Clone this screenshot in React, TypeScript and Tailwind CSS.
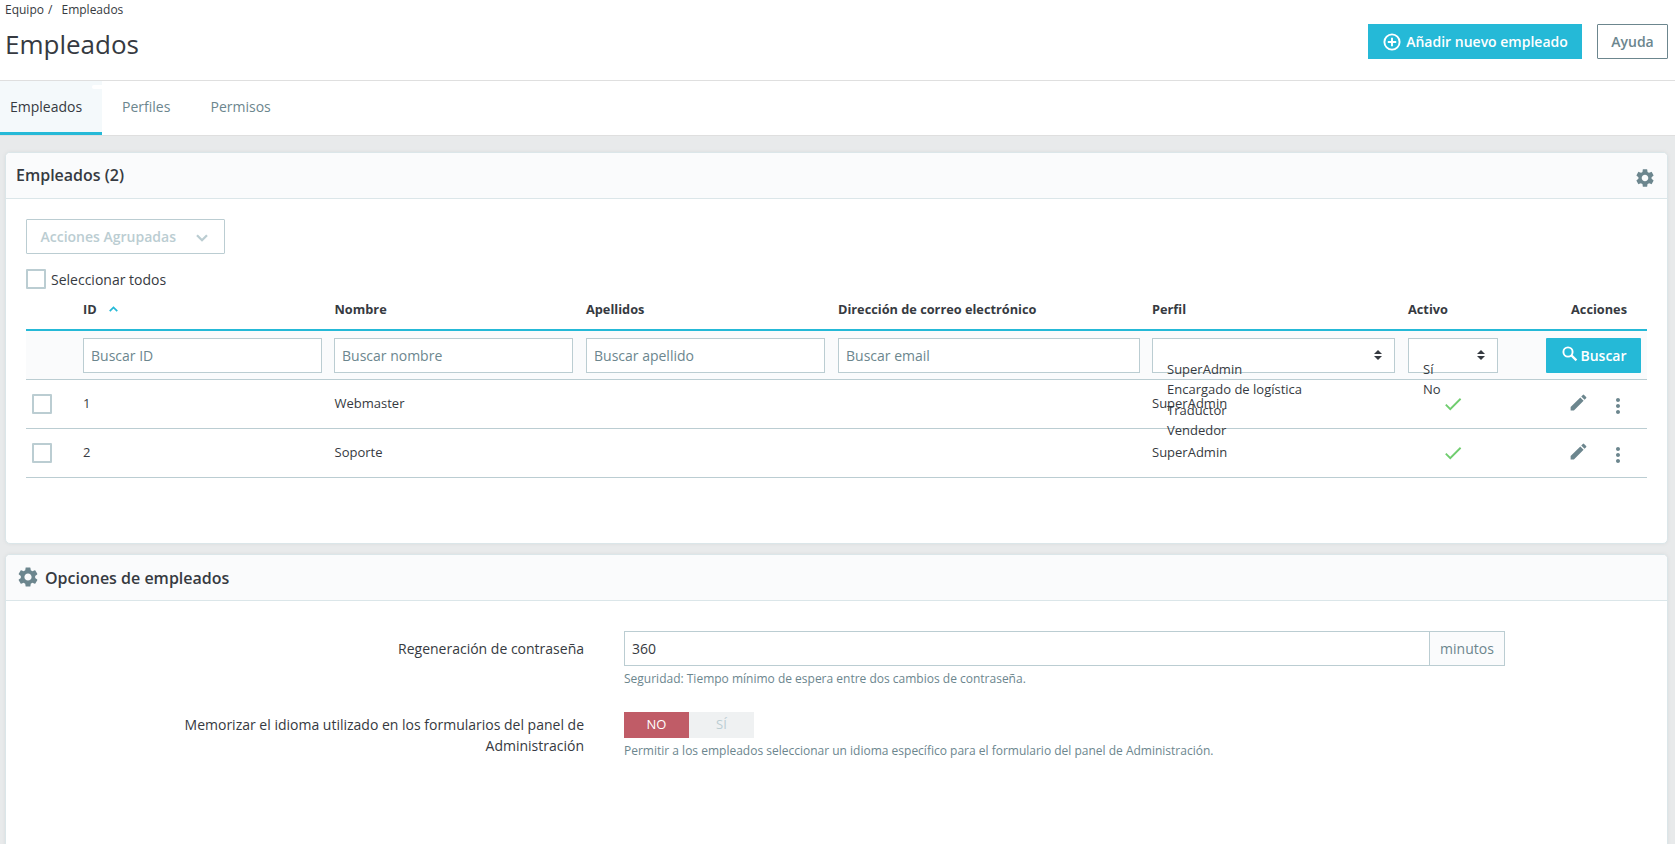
import React from "react";
import { MdCheck, MdEdit, MdMoreVert, MdSettings } from "react-icons/md";

const columns = "grid grid-cols-[51px_251px_252px_252px_314px_256px_102px_143px]";

const employees = [
  { id: 1, name: "Webmaster", profile: "SuperAdmin" },
  { id: 2, name: "Soporte", profile: "SuperAdmin" },
];

function ChevronIcon({ className }: { className: string }) {
  return (
    <svg viewBox="0 0 12 8" className={`fill-none stroke-current ${className}`}>
      <path d="M1 1.2 6 6.2 11 1.2" strokeWidth="2.3" />
    </svg>
  );
}

function AddCircleIcon() {
  return (
    <svg viewBox="0 0 20 20" className="size-5 fill-none stroke-current">
      <circle cx="10" cy="10" r="7.6" strokeWidth="1.9" />
      <path d="M10 5.8v8.4M5.8 10h8.4" strokeWidth="1.9" />
    </svg>
  );
}

function SearchIcon() {
  return (
    <svg viewBox="0 0 20 20" className="mb-[3px] size-5 fill-none stroke-current">
      <circle cx="8" cy="8" r="4.6" strokeWidth="1.9" />
      <path d="m11.4 11.4 5 5" strokeWidth="2.2" />
    </svg>
  );
}

function Checkbox() {
  return <span className="block size-5 shrink-0 rounded-[1px] border-2 border-[#bbcdd2] bg-white" />;
}

function SearchInput({ placeholder }: { placeholder: string }) {
  return (
    <input
      placeholder={placeholder}
      className="block h-[35px] w-full border border-[#bbcdd2] bg-white px-[7px] text-[14px] text-[#363a41] placeholder:text-[#6c868e]"
    />
  );
}

function FilterSelect({ options }: { options: string[] }) {
  return (
    <div className="relative flex h-[35px] items-center justify-end border border-[#bbcdd2] bg-white pr-3">
      <svg viewBox="0 0 8 10" className="mb-px h-[10px] w-2 fill-[#363a41]">
        <path d="M4 0 8 4H0zM4 10 0 6h8z" />
      </svg>
      <ul className="absolute top-5 left-[14px] z-10 text-[13px] leading-[20.4px] whitespace-nowrap text-[#363a41]">
        {options.map((o) => (
          <li key={o}>{o}</li>
        ))}
      </ul>
    </div>
  );
}

function Header() {
  return (
    <header className="bg-white">
      <div className="flex h-[81px] justify-between border-b border-[#dfdfdf] pr-[7px] pl-[5px]">
        <div>
          <nav className="flex h-5 items-center gap-[9px] text-[12px] text-[#363a41]">
            <span>
              Equipo <span className="ml-px">/</span>
            </span>
            <span>Empleados</span>
          </nav>
          <h1 className="mt-1.5 text-[26px] leading-9 text-[#363a41]">Empleados</h1>
        </div>
        <div className="flex gap-[15px] pt-6">
          <button className="flex h-[35px] w-[214px] items-center justify-center gap-1 bg-[#25b9d7] text-[14px] font-semibold text-white">
            <AddCircleIcon />
            Añadir nuevo empleado
          </button>
          <button className="h-[35px] w-[71px] rounded-[1px] border border-[#6c868e] text-[14px] font-semibold text-[#6c868e]">
            Ayuda
          </button>
        </div>
      </div>
      <div className="flex h-[55px] border-b border-[#dfdfdf] text-[14px] text-[#6c868e]">
        <div className="relative flex w-[102px] items-center border-b-[3px] border-[#25b9d7] bg-[#f4f9fb] pl-2.5 text-[#363a41]">
          Empleados
          <span className="absolute top-1 right-0 h-1 w-[10px] rounded-l-full bg-white" />
        </div>
        <div className="flex w-[88px] items-center border-b-[3px] border-transparent pl-5">Perfiles</div>
        <div className="flex items-center border-b-[3px] border-transparent pl-[20.5px]">Permisos</div>
      </div>
    </header>
  );
}

function EmployeeTable() {
  return (
    <div className="text-[13px] text-[#363a41]">
      <div className={`${columns} h-[42px] items-center border-b-2 border-[#25b9d7] pt-0.5 text-[12.75px] font-bold`}>
        <span />
        <span className="flex items-center gap-3 pl-1.5">
          ID
          <ChevronIcon className="mb-0.5 h-1.5 w-[9px] rotate-180 text-[#25b9d7]" />
        </span>
        <span className="pl-[6.5px]">Nombre</span>
        <span className="pl-1.5">Apellidos</span>
        <span className="pl-1.5">Dirección de correo electrónico</span>
        <span className="pl-1.5">Perfil</span>
        <span className="pl-1.5">Activo</span>
        <span className="pr-5 text-right">Acciones</span>
      </div>
      <div className={`${columns} h-[49px] border-b border-[#bbcdd2] bg-[#fafbfc] pt-[7px]`}>
        <span />
        <div className="px-1.5">
          <SearchInput placeholder="Buscar ID" />
        </div>
        <div className="pr-[7px] pl-1.5">
          <SearchInput placeholder="Buscar nombre" />
        </div>
        <div className="pr-[7px] pl-1.5">
          <SearchInput placeholder="Buscar apellido" />
        </div>
        <div className="px-1.5">
          <SearchInput placeholder="Buscar email" />
        </div>
        <div className="pr-[7px] pl-1.5">
          <FilterSelect options={["SuperAdmin", "Encargado de logística", "Traductor", "Vendedor"]} />
        </div>
        <div className="px-1.5">
          <FilterSelect options={["Sí", "No"]} />
        </div>
        <div className="flex justify-end pr-1.5">
          <button className="flex h-[35px] w-[95px] items-center justify-center rounded-[1px] bg-[#25b9d7] text-[14px] font-semibold text-white">
            <SearchIcon />
            Buscar
          </button>
        </div>
      </div>
      {employees.map((e) => (
        <div key={e.id} className={`${columns} h-[49px] items-center border-b border-[#bbcdd2]`}>
          <span className="pl-1.5">
            <Checkbox />
          </span>
          <span className="pl-1.5">{e.id}</span>
          <span className="pl-[6.5px]">{e.name}</span>
          <span />
          <span />
          <span className="pl-1.5">{e.profile}</span>
          <span className="flex justify-center">
            <MdCheck className="size-[22px] text-[#70cd6f]" />
          </span>
          <span className="flex items-center justify-end gap-[17px] pr-[17px] text-[#6c868e]">
            <MdEdit className="mb-1 size-[21px]" />
            <MdMoreVert className="mt-[3px] size-6" />
          </span>
        </div>
      ))}
    </div>
  );
}

const card = "mr-[7px] ml-[5px] rounded-[5px] border border-[#dbe6e9] bg-white shadow-[0_0_4px_rgba(0,0,0,0.06)]";
const cardHeader = "flex h-[46px] items-center rounded-t-[4px] border-b border-[#dbe6e9] bg-[#fafbfc]";

function Options() {
  return (
    <div className="pt-[30px] text-[14px] text-[#363a41]">
      <div className="flex">
        <label className="w-[578px] pt-[7px] text-right leading-[21px]">Regeneración de contraseña</label>
        <div className="ml-[40px] w-[881px]">
          <div className="flex h-[35px] border border-[#bbcdd2]">
            <input defaultValue="360" className="min-w-0 flex-1 px-[7px]" />
            <span className="flex w-[75px] items-center justify-center border-l border-[#bbcdd2] bg-[#fafbfc] text-[#6c868e]">
              minutos
            </span>
          </div>
          <p className="mt-1 text-[12px] leading-[18px] text-[#6c868e]">
            Seguridad: Tiempo mínimo de espera entre dos cambios de contraseña.
          </p>
        </div>
      </div>
      <div className="mt-[24px] flex">
        <label className="w-[578px] pt-[2px] pl-[160px] text-right leading-[21px]">
          Memorizar el idioma utilizado en los formularios del panel de Administración
        </label>
        <div className="ml-[40px]">
          <div className="flex h-[26px] text-[13px]">
            <span className="flex w-[65px] items-center justify-center bg-[#c05c67] text-white">NO</span>
            <span className="flex w-[65px] items-center justify-center bg-[#eff1f2] text-[#bbcdd2]">SÍ</span>
          </div>
          <p className="mt-1 text-[12px] leading-[18px] text-[#6c868e]">
            Permitir a los empleados seleccionar un idioma específico para el formulario del panel de Administración.
          </p>
        </div>
      </div>
    </div>
  );
}

export default function App() {
  return (
    <div className="h-[844px] w-[1675px] overflow-hidden bg-[#e8eaeb] font-['Open_Sans',sans-serif]">
      <Header />
      <section className={`${card} mt-4 h-[392px]`}>
        <div className={`${cardHeader} justify-between pr-[11px] pl-2.5`}>
          <h2 className="mb-0.5 text-[16px] font-semibold text-[#363a41]">Empleados (2)</h2>
          <MdSettings className="mt-1 size-[22px] text-[#6c868e]" />
        </div>
        <div className="px-5 pt-5">
          <button className="flex h-[35px] w-[199px] items-center rounded-[1px] border border-[#bbcdd2] pl-[13.5px] text-[14px] font-semibold text-[#bbcdd2]">
            Acciones Agrupadas
            <ChevronIcon className="mt-[3px] ml-5 h-2 w-3" />
          </button>
          <div className="mt-[15px] flex h-5 items-center gap-[5px] text-[14px] text-[#363a41]">
            <Checkbox />
            Seleccionar todos
          </div>
          <EmployeeTable />
        </div>
      </section>
      <section className={`${card} mt-2.5 h-[320px]`}>
        <div className={`${cardHeader} gap-[5px] pl-2.5`}>
          <MdSettings className="mb-0.5 size-6 text-[#6c868e]" />
          <h2 className="text-[16px] font-semibold text-[#363a41]">Opciones de empleados</h2>
        </div>
        <Options />
      </section>
    </div>
  );
}
